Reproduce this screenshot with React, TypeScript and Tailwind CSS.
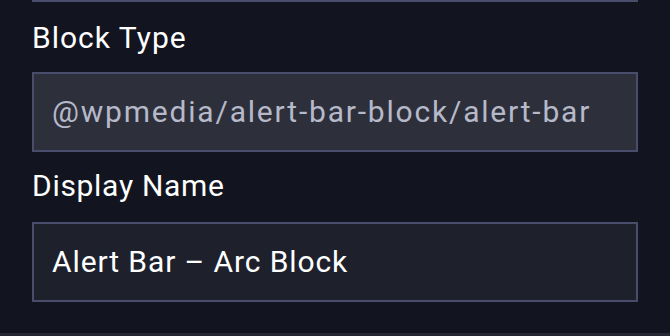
import React from "react";

export default function App() {
  return (
    <div
      className="w-[670px] h-[336px] bg-[#12151f] flex flex-col overflow-hidden"
      style={{ fontFamily: "Roboto, 'Liberation Sans', sans-serif" }}
    >
      <div className="flex-1 flex flex-col px-8">
        <div className="h-[2px] bg-[#4a4c6b]" />
        <label className="mt-[16px] h-[40px] leading-[40px] text-[30px] tracking-[1px] text-white">Block Type</label>
        <div className="mt-[14px] h-[80px] border-2 border-[#4a4c6b] bg-[#2d303b] flex items-center px-[18px]">
          <span className="text-[30px] tracking-[1.8px] text-[#b6b9c9] leading-none">@wpmedia/alert-bar-block/alert-bar</span>
        </div>
        <label className="mt-[14px] h-[40px] leading-[40px] text-[30px] tracking-[0.7px] text-white">Display Name</label>
        <div className="mt-[16px] h-[80px] border-2 border-[#4a4c6b] bg-[#1e212c] flex items-center px-[18px]">
          <span className="text-[30px] tracking-[0.9px] text-white leading-none">Alert Bar – Arc Block</span>
        </div>
      </div>
      <div className="h-[3px] bg-[#262935]" />
    </div>
  );
}
